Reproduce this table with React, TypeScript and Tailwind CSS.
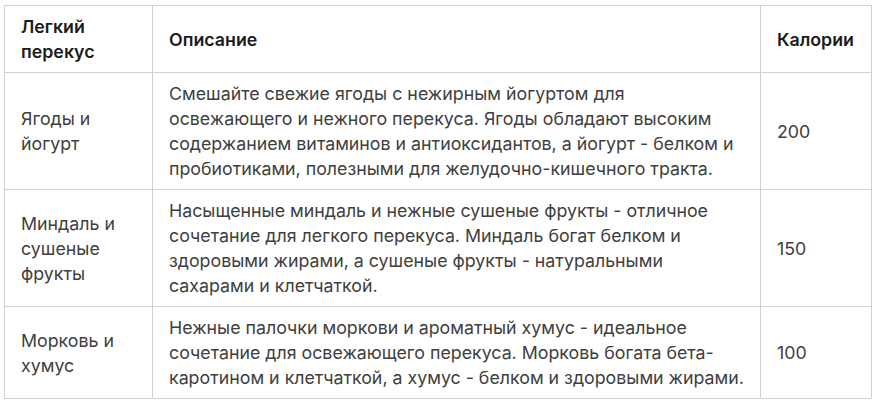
const rows = [
  {
    name: "Ягоды и йогурт",
    desc: "Смешайте свежие ягоды с нежирным йогуртом для освежающего и нежного перекуса. Ягоды обладают высоким содержанием витаминов и антиоксидантов, а йогурт - белком и пробиотиками, полезными для желудочно-кишечного тракта.",
    kcal: "200",
  },
  {
    name: "Миндаль и сушеные фрукты",
    desc: "Насыщенные миндаль и нежные сушеные фрукты - отличное сочетание для легкого перекуса. Миндаль богат белком и здоровыми жирами, а сушеные фрукты - натуральными сахарами и клетчаткой.",
    kcal: "150",
  },
  {
    name: "Морковь и хумус",
    desc: "Нежные палочки моркови и ароматный хумус - идеальное сочетание для освежающего перекуса. Морковь богата бета-каротином и клетчаткой, а хумус - белком и здоровыми жирами.",
    kcal: "100",
  },
];

export default function App() {
  return (
    <div className="min-h-[406px] w-[880px] bg-white pl-[4px] pt-[5px] font-['Inter',sans-serif] text-[17.8px] leading-[25px]">
      <table className="w-[867px] table-fixed border-collapse border border-[#d0d0d0]">
        <colgroup>
          <col className="w-[148px]" />
          <col className="w-[608px]" />
          <col className="w-[111px]" />
        </colgroup>
        <thead>
          <tr className="text-left text-[#1c1c1c]">
            <th className="border border-[#d0d0d0] px-4 py-2 align-middle font-semibold">Легкий перекус</th>
            <th className="border border-[#d0d0d0] px-4 py-2 align-middle font-semibold">Описание</th>
            <th className="border border-[#d0d0d0] px-4 py-2 align-middle font-semibold">Калории</th>
          </tr>
        </thead>
        <tbody className="text-[#404040]">
          {rows.map((r) => (
            <tr key={r.name}>
              <td className="border border-[#d0d0d0] px-4 py-2 align-middle">{r.name}</td>
              <td className="border border-[#d0d0d0] px-4 py-2 align-middle">{r.desc}</td>
              <td className="border border-[#d0d0d0] px-4 py-2 align-middle">{r.kcal}</td>
            </tr>
          ))}
        </tbody>
      </table>
    </div>
  );
}
